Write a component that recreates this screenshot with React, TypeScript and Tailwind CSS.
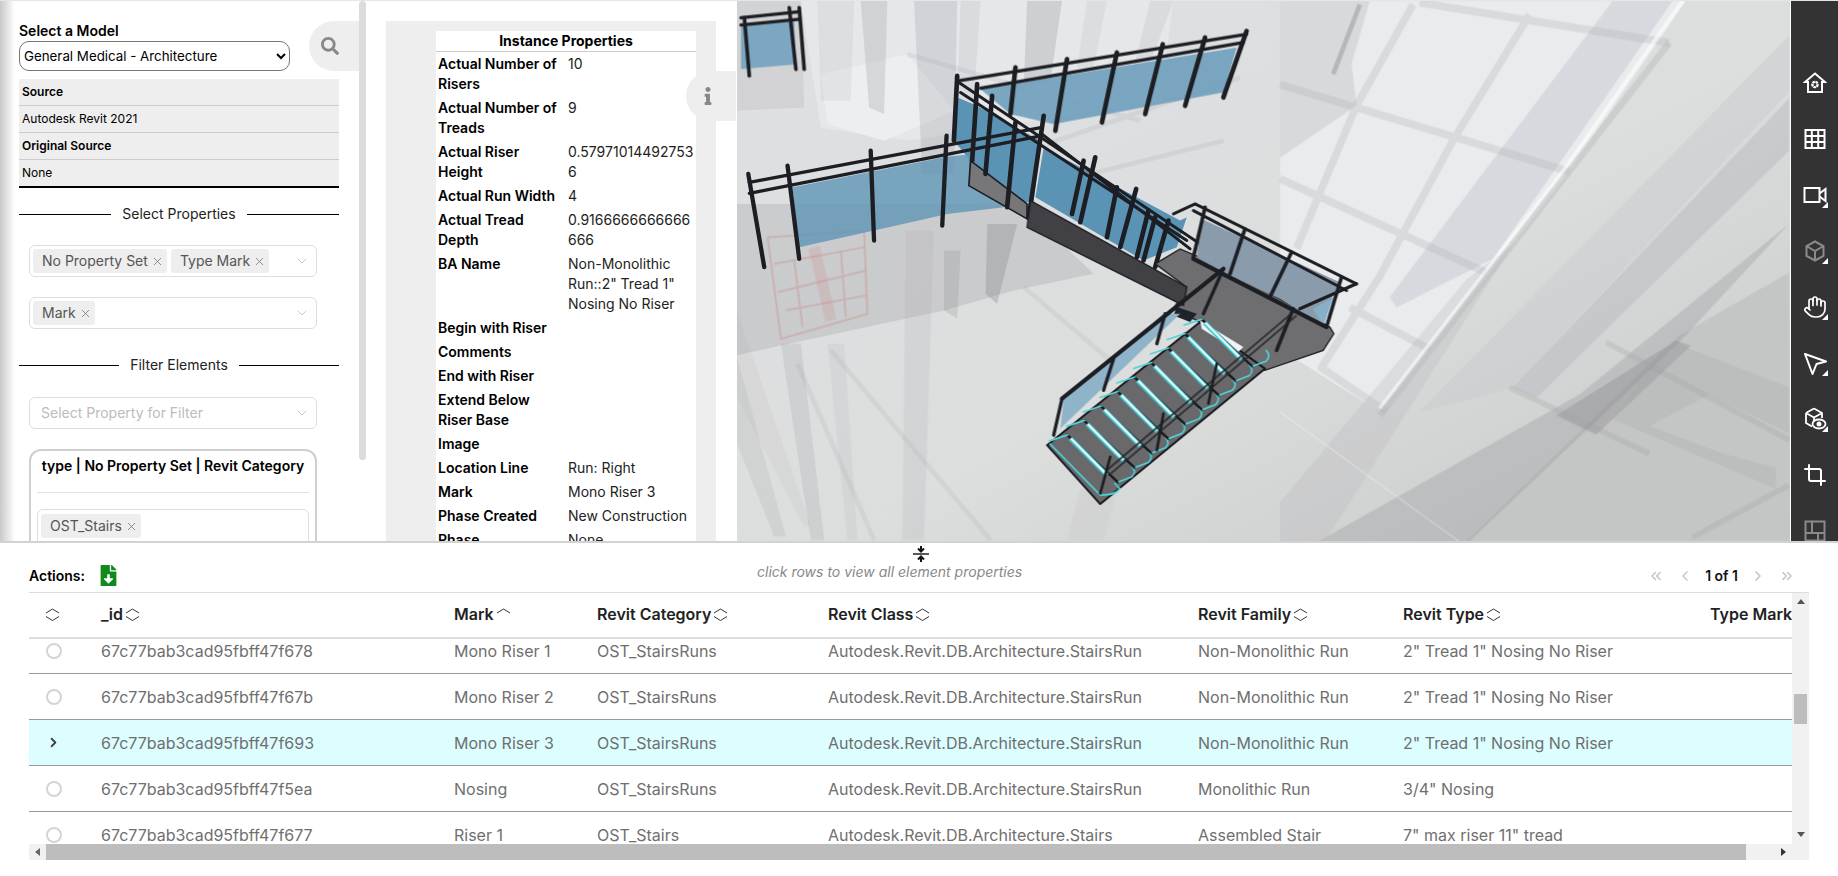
import { ChevronLeft, ChevronRight, ChevronsLeft, ChevronsRight, ChevronDown, Crop, Hand, X } from 'lucide-react';
import { FaFileDownload, FaInfo, FaSearch } from 'react-icons/fa';

const gridCols = 'grid grid-cols-[72px_353px_143px_231px_370px_205px_307px_1fr]';

const rows = [
  { id: '67c77bab3cad95fbff47f678', mark: 'Mono Riser 1', cat: 'OST_StairsRuns', cls: 'Autodesk.Revit.DB.Architecture.StairsRun', fam: 'Non-Monolithic Run', type: '2" Tread 1" Nosing No Riser' },
  { id: '67c77bab3cad95fbff47f67b', mark: 'Mono Riser 2', cat: 'OST_StairsRuns', cls: 'Autodesk.Revit.DB.Architecture.StairsRun', fam: 'Non-Monolithic Run', type: '2" Tread 1" Nosing No Riser' },
  { id: '67c77bab3cad95fbff47f693', mark: 'Mono Riser 3', cat: 'OST_StairsRuns', cls: 'Autodesk.Revit.DB.Architecture.StairsRun', fam: 'Non-Monolithic Run', type: '2" Tread 1" Nosing No Riser', selected: true },
  { id: '67c77bab3cad95fbff47f5ea', mark: 'Nosing', cat: 'OST_StairsRuns', cls: 'Autodesk.Revit.DB.Architecture.StairsRun', fam: 'Monolithic Run', type: '3/4" Nosing' },
  { id: '67c77bab3cad95fbff47f677', mark: 'Riser 1', cat: 'OST_Stairs', cls: 'Autodesk.Revit.DB.Architecture.Stairs', fam: 'Assembled Stair', type: '7" max riser 11" tread' },
];

const props: [string, string][] = [
  ['Actual Number of Risers', '10'],
  ['Actual Number of Treads', '9'],
  ['Actual Riser Height', '0.579710144927536'],
  ['Actual Run Width', '4'],
  ['Actual Tread Depth', '0.9166666666666666'],
  ['BA Name', 'Non-Monolithic Run::2" Tread 1" Nosing No Riser'],
  ['Begin with Riser', ''],
  ['Comments', ''],
  ['End with Riser', ''],
  ['Extend Below Riser Base', ''],
  ['Image', ''],
  ['Location Line', 'Run: Right'],
  ['Mark', 'Mono Riser 3'],
  ['Phase Created', 'New Construction'],
  ['Phase Demolished', 'None'],
];

const SortIcon = ({ up = true, down = true }: { up?: boolean; down?: boolean }) => (
  <svg width="15" height="15" viewBox="0 0 15 15" fill="none" stroke="#333" strokeWidth="1" className="shrink-0">
    {up && <path d="M1 6 L7.5 2 L14 6" />}
    {down && <path d="M1 9.5 L7.5 13.5 L14 9.5" />}
  </svg>
);

const Chip = ({ label }: { label: string }) => (
  <span className="flex items-center gap-[3px] h-6 pl-[9px] pr-[3px] bg-[#eeeeee] rounded-[3px] text-sm text-[#555] whitespace-nowrap">
    {label}
    <X size={13} strokeWidth={1.5} className="text-[#777]" />
  </span>
);

const MultiSelect = ({ children, chips }: { children?: React.ReactNode; chips?: string[] }) => (
  <div className="flex items-center justify-between ml-[10px] w-[288px] h-[32px] pl-[3px] pr-[6px] border border-[#dedede] rounded-md bg-white">
    <div className="flex gap-[4px]">
      {chips?.map((c) => <Chip key={c} label={c} />)}
      {children}
    </div>
    <ChevronDown size={16} strokeWidth={1} className="text-[#aaa]" />
  </div>
);

const Divider = ({ label, cls }: { label: string; cls: string }) => (
  <div className={`flex items-center gap-[11px] w-[320px] text-sm text-[#222] ${cls}`}>
    <div className="flex-1 h-px bg-black" />
    {label}
    <div className="flex-1 h-px bg-black" />
  </div>
);

// drawn in the coordinates of a 3x crop, hence the group scales below
const Rail = ({ d, w = 9 }: { d: string; w?: number }) => (
  <path d={d} fill="none" stroke="#1c1e23" strokeWidth={w} strokeLinecap="round" />
);

const upperPosts = ['M825 200 L810 340', 'M980 175 L945 390', 'M1130 155 L1085 365', 'M1268 130 L1215 340', 'M1395 110 L1335 315', 'M1520 90 L1450 290'];
const leftPosts = ['M22 520 L70 800', 'M140 495 L175 775', 'M390 450 L400 720', 'M618 405 L605 675'];
const flightPosts = ['M650 225 L640 420', 'M710 250 L695 480', 'M755 285 L735 520', 'M825 365 L800 620', 'M910 345 L865 650', 'M1030 480 L995 640', 'M1065 470 L1020 665', 'M1130 560 L1100 710', 'M1188 565 L1140 740', 'M1225 630 L1190 770', 'M1245 650 L1210 780', 'M1285 660 L1245 800'];

const Building = () => (
  <svg viewBox="736 0 1055 541" className="block w-full h-full">
    <defs>
      <linearGradient id="floor" x1="0" y1="0" x2="1" y2="1">
        <stop offset="0" stopColor="#dfe0e2" />
        <stop offset="0.55" stopColor="#dcdddd" />
        <stop offset="1" stopColor="#c6c7c7" />
      </linearGradient>
      <filter id="soft"><feGaussianBlur stdDeviation="0.7" /></filter>
    </defs>
    <rect x="736" y="0" width="1055" height="541" fill="url(#floor)" />

    <g filter="url(#soft)">
      {/* back wall and columns */}
      <g transform="translate(740 0) scale(0.3333)">
        <polygon points="180,0 1300,0 1260,300 500,420 240,380" fill="#e8eaec" opacity="0.7" />
        <polygon points="240,220 500,160 640,330 430,420 260,370" fill="#eceef0" />
        <polygon points="-12,0 180,0 190,320 -12,330" fill="#8a8c90" opacity="0.15" />
        <polygon points="230,0 340,0 330,300 240,300" fill="#8a8c90" opacity="0.1" />
        <polygon points="360,0 440,0 430,340 385,320" fill="#70737a" opacity="0.18" />
        <polygon points="520,0 650,0 640,520 545,520" fill="#70737a" opacity="0.16" />
        <polygon points="660,0 720,0 700,300 650,300" fill="#70737a" opacity="0.1" />
        <polygon points="860,0 965,0 930,240 850,260" fill="#70737a" opacity="0.2" />
        <polygon points="1040,0 1100,0 1060,200 1010,200" fill="#70737a" opacity="0.08" />
        <polygon points="1230,0 1300,0 1210,240 1170,240" fill="#70737a" opacity="0.1" />
        <path d="M920 430 L1500 230 M1050 520 L1450 420 M500 160 L1200 360" stroke="#70737a" strokeWidth="14" opacity="0.1" fill="none" />
      </g>

      {/* skylight grid, right side */}
      <g transform="translate(1280 0) scale(0.3333 0.3489)">
        <polygon points="0,0 1220,0 860,500 300,1180 0,1000" fill="#e9ebed" />
        <polygon points="1530,780 1530,1560 550,1560 1200,960" fill="#c4c5c5" />
        <polygon points="1000,0 1180,0 640,740 350,880 330,850" fill="#cdd0d5" opacity="0.65" />
        <polygon points="1530,100 1530,260 700,1110 420,1180" fill="#c9cbce" opacity="0.5" />
        <polygon points="1530,280 1530,430 770,1140 700,1110" fill="#b4b7be" opacity="0.45" />
        <polygon points="1530,640 1200,980 560,1560 100,1560 900,1130" fill="#8f9297" opacity="0.3" />
        <polygon points="1190,975 1235,990 950,1245 830,1190" fill="#7d7f83" opacity="0.3" />
        <polygon points="560,800 700,700 130,1560 0,1560 0,1440" fill="#b8babd" opacity="0.3" />
        <polygon points="1180,980 1530,1110 1530,1240 1290,1130 1110,1220 1330,1300 1490,1340 1490,1400 1000,1200" fill="#a5a7a9" opacity="0.25" />
        <polygon points="0,0 270,0 215,180 230,300 0,450" fill="#8a8c90" opacity="0.18" />
        <path d="M240 10 L160 210" stroke="#8c8e92" strokeWidth="14" opacity="0.45" />
        <path d="M420 5 L1170 120 M0 240 L870 490 M0 510 L620 780 M210 880 L450 1000 M120 1050 L320 1180 M400 10 L230 300 L50 710 M750 40 L520 400 L300 790 L120 1060" stroke="#a8abaf" strokeWidth="22" opacity="0.25" fill="none" />
        <path d="M1210 0 L850 490 L300 1170" stroke="#ffffff" strokeWidth="12" opacity="0.6" fill="none" />
        <path d="M1170 120 L860 500 L300 1190" stroke="#b4b6b6" strokeWidth="20" opacity="0.4" fill="none" />
        <path d="M0 1180 L550 1560" stroke="#ffffff" strokeWidth="2" opacity="0.7" fill="none" />
        <path d="M690 1110 L1110 1300 M980 980 L1530 1260" stroke="#9b9ea1" strokeWidth="16" opacity="0.25" fill="none" />
        <path d="M1240 1540 L1530 1390" stroke="#9b9ea1" strokeWidth="16" opacity="0.25" fill="none" />
      </g>

      {/* floor shadows, red door frame */}
      <g transform="translate(730 230) scale(0.3333)">
        <polygon points="18,-80 870,-80 1090,130 850,180 640,240 150,345 18,375" fill="#6f7275" opacity="0.17" />
        <polygon points="150,340 210,340 280,930 240,930" fill="#70737a" opacity="0.13" />
        <polygon points="525,0 610,0 580,930 515,930" fill="#70737a" opacity="0.08" />
        <polygon points="18,380 165,920 130,920 18,640" fill="#70737a" opacity="0.1" />
        <polygon points="18,240 240,890 220,890 18,500" fill="#70737a" opacity="0.06" />
        <polygon points="770,-20 860,-20 800,220 765,190" fill="#5f6268" opacity="0.22" />
        <polygon points="640,60 690,60 680,265 640,240" fill="#5f6268" opacity="0.15" />
        <polygon points="290,340 340,340 380,930 350,930" fill="#70737a" opacity="0.07" />
        <path d="M300 360 L780 930 M200 400 L430 930 M880 170 L1140 390" stroke="#70737a" strokeWidth="14" opacity="0.09" fill="none" />
        <polygon points="1050,780 1160,780 1120,930 1010,930" fill="#70737a" opacity="0.05" />
        <path d="M250 50 L300 270" stroke="#c99" strokeWidth="34" opacity="0.3" fill="none" />
        <path d="M110 20 L150 325 L410 250 L400 0 L110 20 M130 100 L400 50 M140 185 L405 120 M165 240 L405 195 M190 90 L215 290 M330 60 L345 260" stroke="#c98a8a" strokeWidth="6" opacity="0.4" fill="none" />
      </g>
    </g>

    {/* rails and glass, upper flight */}
    <g transform="translate(740 0) scale(0.3333)">
      <polygon points="0,70 160,62 165,190 0,205" fill="#6f9fbd" opacity="0.85" />
      <Rail d="M10 50 L25 225 M145 20 L165 205 M175 20 L190 205" w={11} />
      <Rail d="M0 50 L175 32 M0 72 L175 55" w={10} />

      <polygon points="720,265 1490,140 1450,275 940,370 810,340" fill="#6f9fbd" opacity="0.9" />
      {upperPosts.map((d) => <Rail key={d} d={d} w={14} />)}
      <Rail d="M655 240 L1520 100 M720 262 L1510 125" w={10} />

      <polygon points="155,560 610,470 690,460 790,620 620,640 400,690 175,740" fill="#5e95b5" opacity="0.8" />
      <polygon points="650,290 700,310 900,420 880,600 790,620 690,480 640,420" fill="#5b93b5" />
      <polygon points="885,590 910,440 1320,660 1340,650 1310,740 1210,780" fill="#5b93b5" />
      <polygon points="690,480 860,610 860,655 685,555" fill="#77777a" stroke="#1c1e23" strokeWidth="5" />
      {leftPosts.map((d) => <Rail key={d} d={d} w={13} />)}
      {flightPosts.map((d) => <Rail key={d} d={d} w={14} />)}
      <Rail d="M25 545 L905 380 M25 578 L905 405" w={10} />
      <Rail d="M655 245 L1380 730 M660 275 L1340 720" w={9} />
      <Rail d="M905 400 L1350 745" w={9} />
    </g>

    {/* wall, landing and lower flight */}
    <g transform="translate(960 180) scale(0.3333)">
      <polygon points="585,250 660,205 800,265 1110,440 1122,460 1090,510 915,570 720,425 640,385 680,320" fill="#6e6e70" stroke="#1c1e23" strokeWidth="4" />
      <polygon points="210,60 680,320 670,375 200,140" fill="#404045" stroke="#1c1e23" strokeWidth="4" />
      <polygon points="725,115 1140,305 1120,345 1080,430 960,355 800,280 710,230" fill="#8a9cab" />
      <polygon points="1060,385 1120,350 1090,440" fill="#86b0c8" />
      <polygon points="650,380 710,400 690,425 640,405" fill="#20222a" />
      <Rail d="M735 80 L700 230 M855 145 L810 280 M995 215 L930 350 M1145 290 L1100 440 M1000 385 L950 510" w={11} />
      <Rail d="M640 100 L705 70 L1190 310 M700 90 L1160 330" w={9} />
      <Rail d="M700 235 L1100 440" w={13} />
      <Rail d="M1190 310 L1020 385" w={10} />

      <polygon points="310,660 610,400 660,400 300,745" fill="#8fb4c9" />
      <polygon points="720,425 915,565 420,972 260,795" fill="#69696b" stroke="#16181c" strokeWidth="6" strokeLinejoin="round" />
      <Rail d="M305 655 L280 765 M460 535 L430 630 M615 400 L590 490 M790 265 L730 400" w={10} />
      <Rail d="M305 655 L790 265" w={13} />
      <polygon points="720,420 850,500 835,515 725,445" fill="#f2f3f3" />

      {Array.from({ length: 9 }, (_, i) => (
        <g key={i} transform={`translate(${i * 50.5} ${-i * 43.5})`}>
          <path d="M318 762 L475 908" stroke="#16181c" strokeWidth="7" fill="none" />
          <path d="M268 782 L322 764 M476 905 L515 890 Q530 875 515 858" stroke="#4fd2d8" strokeWidth="5" fill="none" strokeLinecap="round" />
          <path d="M330 775 L440 885" stroke="#3cc4cc" strokeWidth="14" fill="none" />
          <path d="M332 775 L438 882" stroke="#dffafa" strokeWidth="7" fill="none" />
        </g>
      ))}
      <path d="M268 790 L420 945 Q470 945 478 925 L462 908" stroke="#4fd2d8" strokeWidth="5" fill="none" />

      <path d="M440 870 L1000 395 M452 880 L1010 405" stroke="#25272c" strokeWidth="6" fill="none" opacity="0.8" />
      <Rail d="M450 830 L420 940 M610 700 L590 810 M770 550 L745 670" w={8} />
    </g>
  </svg>
);

const Corner = () => (
  <svg width="6" height="6" viewBox="0 0 6 6" className="absolute left-[31px] top-[35px]">
    <polygon points="6,0 6,6 0,6" fill="#fff" />
  </svg>
);

const tools = [
  <svg key="home" width="24" height="24" viewBox="0 0 24 24" fill="none" stroke="#fff" strokeWidth="2"><path d="M12 2.5 L22 11 H19 V21 H5 V11 H2 Z" /><circle cx="12" cy="13.5" r="2.6" strokeDasharray="2.5 .6" strokeWidth="2.4" /></svg>,
  <svg key="grid" width="24" height="24" viewBox="0 0 24 24" fill="none" stroke="#fff" strokeWidth="2"><rect x="2.5" y="3" width="19" height="18" /><path d="M2.5 9 H21.5 M2.5 15 H21.5 M8.8 3 V21 M15.2 3 V21" /></svg>,
  <svg key="cam" width="24" height="24" viewBox="0 0 24 24" fill="none" stroke="#fff" strokeWidth="2"><rect x="1.5" y="5" width="15" height="14" /><path d="M16.5 10.5 L22.5 6 V18 L16.5 13.5" /></svg>,
  <svg key="cube" width="24" height="24" viewBox="0 0 24 24" fill="none" stroke="#8a8a8a" strokeWidth="2"><path d="M12 2.5 L20.5 7 V17 L12 21.5 L3.5 17 V7 Z M3.5 7 L12 12 L20.5 7 M12 12 V21.5" /></svg>,
  <Hand key="hand" size={24} className="text-white" strokeWidth={1.7} />,
  <svg key="arrow" width="24" height="24" viewBox="0 0 24 24" fill="none" stroke="#fff" strokeWidth="2" strokeLinejoin="round"><path d="M2 3 L23 10.5 L13.5 13 L9.5 23 Z" /></svg>,
  <svg key="eye" width="24" height="24" viewBox="0 0 24 24" fill="none" stroke="#fff" strokeWidth="1.8"><path d="M11 1.5 L19 6 V11 M3 6 L11 1.5 M3 6 V16 L9 19.5 M3 6 L11 10.5 L19 6 M11 10.5 V14" /><ellipse cx="16" cy="17" rx="6.5" ry="4.5" fill="#333" /><circle cx="16" cy="17" r="1.6" fill="#fff" /></svg>,
  <Crop key="crop" size={24} className="text-white" strokeWidth={2} />,
  <svg key="layout" width="24" height="24" viewBox="0 0 24 24" fill="none" stroke="#8a8a8a" strokeWidth="2"><rect x="2.5" y="2.5" width="19" height="19" /><path d="M9 2.5 V14 M2.5 14 H21.5 M15 14 V21.5" /></svg>,
];
const withCorner = [2, 3, 4, 5, 6];

const App = () => {
  return (
    <div className="w-[1838px] h-[876px] overflow-hidden bg-white font-[Inter,sans-serif] text-black">
      <div className="flex h-[543px] border-b-2 border-[#d2d2d2] border-t border-t-[#e6e6e6]">
        {/* left panel */}
        <div className="relative w-[370px] shrink-0 overflow-hidden bg-gradient-to-r from-[#c9c9c9] via-white via-[4%] to-white pl-[19px] pt-[22px]">
          <div className="text-[14px] leading-[16px] font-semibold">Select a Model</div>
          <select className="block w-[271px] h-[30px] mt-[2px] text-[13.33px] border border-[#767676] rounded-[10px] bg-white">
            <option>General Medical - Architecture</option>
          </select>
          <div className="w-[320px] mt-[8px] bg-[#eeeeee] text-[12px] border-b-2 border-black">
            <div className="h-[27px] flex items-center px-[3px] font-semibold border-b border-[#cccccc]">Source</div>
            <div className="h-[27px] flex items-center px-[3px] border-b border-[#cccccc]">Autodesk Revit 2021</div>
            <div className="h-[27px] flex items-center px-[3px] font-semibold border-b border-[#cccccc]">Original Source</div>
            <div className="h-[26px] flex items-center px-[3px]">None</div>
          </div>
          <Divider label="Select Properties" cls="mt-[16px] mb-[21px]" />
          <MultiSelect chips={['No Property Set', 'Type Mark']} />
          <div className="mt-[20px]"><MultiSelect chips={['Mark']} /></div>
          <Divider label="Filter Elements" cls="mt-[26px] mb-[22px]" />
          <MultiSelect><span className="pl-[8px] text-sm text-[#bcbcbc]">Select Property for Filter</span></MultiSelect>
          <div className="ml-[10px] mt-[20px] w-[288px] h-[120px] px-[6px] border-2 border-[#cfcfcf] rounded-xl">
            <div className="h-[28px] flex items-center justify-center text-[14px] font-semibold whitespace-nowrap">type | No Property Set | Revit Category</div>
            <div className="mt-[13px] pt-[16px] border-t border-[#e2e2e2]">
              <div className="h-[38px] p-[3px] border border-[#dedede] rounded-md">
                <div className="inline-flex"><Chip label="OST_Stairs" /></div>
              </div>
            </div>
          </div>
          <div className="absolute left-[309px] top-[20px] w-[50px] h-[50px] flex items-center justify-center pr-[8px] bg-[#eeeeee] rounded-l-full">
            <FaSearch size={18} className="text-[#888]" />
          </div>
          <div className="absolute left-[359px] top-0 w-[7px] h-[459px] bg-[#dcdcdc] rounded-full" />
        </div>

        {/* instance properties */}
        <div className="relative w-[366px] shrink-0 overflow-hidden pl-[16px] pt-[20px]">
          <div className="w-[330px] h-full bg-[#eeeeee] pl-[50px] pr-[20px] pt-[10px]">
            <div className="h-full bg-white text-sm leading-[20px]">
              <div className="h-[21px] text-center font-bold border-b border-[#cccccc]">Instance Properties</div>
              {props.map(([k, v]) => (
                <div key={k} className="grid grid-cols-[132px_128px] py-[2px]">
                  <div className="pl-[2px] pr-[6px] font-semibold">{k}</div>
                  <div className="text-[#222] [overflow-wrap:anywhere]">{v}</div>
                </div>
              ))}
            </div>
          </div>
          <div className="absolute right-0 top-[70px] w-[50px] h-[50px] flex items-center justify-center pr-[6px] bg-[#eeeeee] rounded-l-full">
            <FaInfo size={18} className="text-[#888]" />
          </div>
        </div>

        {/* viewer */}
        <div className="flex-1 min-w-0 overflow-hidden">
          <Building />
        </div>
        <div className="w-[47px] shrink-0 bg-[#333333] overflow-hidden pt-[54px]">
          {tools.map((icon, i) => (
            <div key={i} className="relative h-[56px] flex items-center justify-center">
              {icon}
              {withCorner.includes(i) && <Corner />}
            </div>
          ))}
        </div>
      </div>

      {/* table area */}
      <div className="relative h-[333px]">
        <svg width="20" height="18" viewBox="0 0 20 18" className="absolute left-[911px] top-[2px]" fill="none" stroke="#111" strokeWidth="2">
          <path d="M2 9 H18" strokeWidth="1.4" />
          <path d="M10 1 V6 M7 3.5 L10 6.5 L13 3.5 M10 17 V12 M7 14.5 L10 11.5 L13 14.5" />
        </svg>
        <div className="flex items-center h-[49px] pl-[29px] pt-[16px]">
          <span className="w-[69px] text-sm font-semibold">Actions:</span>
          <FaFileDownload size={21} className="text-[#108a1c]" />
          <span className="ml-[638px] -mt-[8px] text-sm italic text-[#888] whitespace-nowrap">click rows to view all element properties</span>
          <div className="ml-auto mr-[43px] flex items-center text-[#c8c8c8]">
            <ChevronsLeft size={16} strokeWidth={2.5} />
            <ChevronLeft size={16} strokeWidth={2.5} className="ml-[13px]" />
            <span className="mx-[12px] text-sm font-semibold text-[#111] whitespace-nowrap">1 of 1</span>
            <ChevronRight size={16} strokeWidth={2.5} />
            <ChevronsRight size={16} strokeWidth={2.5} className="ml-[13px]" />
          </div>
        </div>

        <div className="flex ml-[29px] w-[1780px] h-[268px] border-t border-[#dddddd]">
          <div className="flex flex-col w-[1763px]">
            <div className={`${gridCols} h-[46px] shrink-0 items-center pb-[2px] border-b-2 border-[#dddddd] text-base font-semibold text-[#222] whitespace-nowrap overflow-hidden`}>
              <div className="pl-[16px]"><SortIcon /></div>
              <div className="flex items-center gap-[2px]">_id <SortIcon /></div>
              <div className="flex items-center gap-[2px]">Mark <SortIcon down={false} /></div>
              <div className="flex items-center gap-[2px]">Revit Category <SortIcon /></div>
              <div className="flex items-center gap-[2px]">Revit Class <SortIcon /></div>
              <div className="flex items-center gap-[2px]">Revit Family <SortIcon /></div>
              <div className="flex items-center gap-[2px]">Revit Type <SortIcon /></div>
              <div>Type Mark</div>
            </div>
            <div className="flex-1 min-h-0 overflow-hidden">
              <div className="-mt-[11px]">
                {rows.map((r) => (
                  <div key={r.id} className={`${gridCols} h-[46px] items-center border-b border-[#999999] text-base text-[#6f6f6f] whitespace-nowrap ${r.selected ? 'bg-[#dcfeff]' : 'bg-white'}`}>
                    <div className="pl-[17px]">
                      {r.selected
                        ? <ChevronRight size={15} strokeWidth={3} className="text-[#444]" />
                        : <div className="w-[16px] h-[16px] rounded-full border-2 border-[#d4d4d4]" />}
                    </div>
                    <div>{r.id}</div>
                    <div>{r.mark}</div>
                    <div>{r.cat}</div>
                    <div>{r.cls}</div>
                    <div>{r.fam}</div>
                    <div>{r.type}</div>
                    <div />
                  </div>
                ))}
              </div>
            </div>
            <div className="flex items-center h-[16px] shrink-0 bg-[#f1f1f1]">
              <div className="w-[17px] flex justify-center"><svg width="5" height="8" viewBox="0 0 5 8"><polygon points="5,0 5,8 0,4" fill="#666" /></svg></div>
              <div className="w-[1700px] h-[16px] bg-[#bdbdbd]" />
              <div className="ml-auto w-[17px] flex justify-center"><svg width="5" height="8" viewBox="0 0 5 8"><polygon points="0,0 0,8 5,4" fill="#333" /></svg></div>
            </div>
          </div>
          <div className="flex flex-col items-center w-[17px] bg-[#f1f1f1] pt-[6px]">
            <svg width="8" height="5" viewBox="0 0 8 5"><polygon points="0,5 8,5 4,0" fill="#555" /></svg>
            <div className="mt-[90px] w-[13px] h-[30px] bg-[#bdbdbd]" />
            <svg width="8" height="5" viewBox="0 0 8 5" className="mt-[108px]"><polygon points="0,0 8,0 4,5" fill="#555" /></svg>
          </div>
        </div>
      </div>
    </div>
  );
};

export default App;
